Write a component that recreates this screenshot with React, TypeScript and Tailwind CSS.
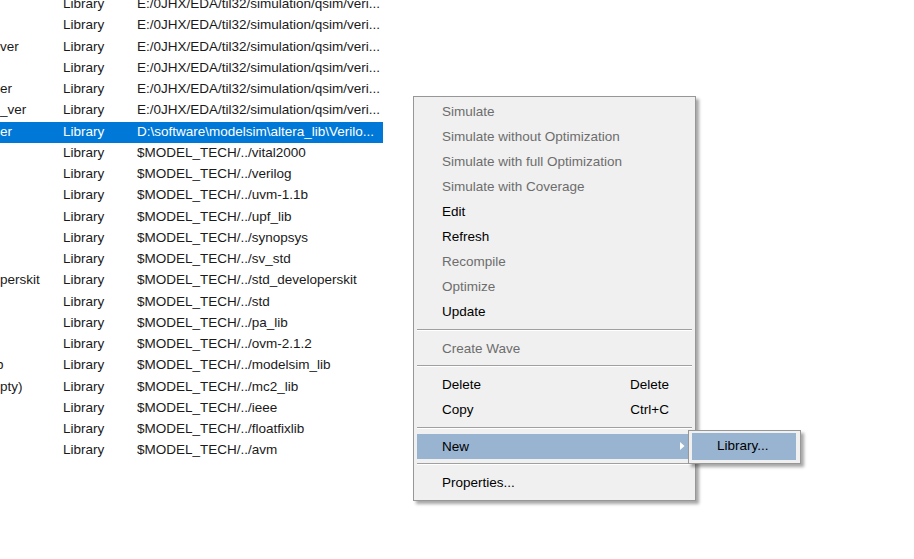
import React from "react";

type Row = { name: string; nameOffset?: number; path: string; selected?: boolean };

const rows: Row[] = [
  { name: "", path: "E:/0JHX/EDA/til32/simulation/qsim/veri..." },
  { name: "", path: "E:/0JHX/EDA/til32/simulation/qsim/veri..." },
  { name: "ver", path: "E:/0JHX/EDA/til32/simulation/qsim/veri..." },
  { name: "", path: "E:/0JHX/EDA/til32/simulation/qsim/veri..." },
  { name: "er", path: "E:/0JHX/EDA/til32/simulation/qsim/veri..." },
  { name: "_ver", path: "E:/0JHX/EDA/til32/simulation/qsim/veri..." },
  { name: "er", path: "D:\\software\\modelsim\\altera_lib\\Verilo...", selected: true },
  { name: "", path: "$MODEL_TECH/../vital2000" },
  { name: "", path: "$MODEL_TECH/../verilog" },
  { name: "", path: "$MODEL_TECH/../uvm-1.1b" },
  { name: "", path: "$MODEL_TECH/../upf_lib" },
  { name: "", path: "$MODEL_TECH/../synopsys" },
  { name: "", path: "$MODEL_TECH/../sv_std" },
  { name: "perskit", path: "$MODEL_TECH/../std_developerskit" },
  { name: "", path: "$MODEL_TECH/../std" },
  { name: "", path: "$MODEL_TECH/../pa_lib" },
  { name: "", path: "$MODEL_TECH/../ovm-2.1.2" },
  { name: "b", nameOffset: -4, path: "$MODEL_TECH/../modelsim_lib" },
  { name: "pty)", path: "$MODEL_TECH/../mc2_lib" },
  { name: "", path: "$MODEL_TECH/../ieee" },
  { name: "", path: "$MODEL_TECH/../floatfixlib" },
  { name: "", path: "$MODEL_TECH/../avm" },
];

type Item =
  | { kind: "item"; label: string; enabled: boolean; shortcut?: string; active?: boolean; arrow?: boolean }
  | { kind: "sep" };

const items: Item[] = [
  { kind: "item", label: "Simulate", enabled: false },
  { kind: "item", label: "Simulate without Optimization", enabled: false },
  { kind: "item", label: "Simulate with full Optimization", enabled: false },
  { kind: "item", label: "Simulate with Coverage", enabled: false },
  { kind: "item", label: "Edit", enabled: true },
  { kind: "item", label: "Refresh", enabled: true },
  { kind: "item", label: "Recompile", enabled: false },
  { kind: "item", label: "Optimize", enabled: false },
  { kind: "item", label: "Update", enabled: true },
  { kind: "sep" },
  { kind: "item", label: "Create Wave", enabled: false },
  { kind: "sep" },
  { kind: "item", label: "Delete", enabled: true, shortcut: "Delete" },
  { kind: "item", label: "Copy", enabled: true, shortcut: "Ctrl+C" },
  { kind: "sep" },
  { kind: "item", label: "New", enabled: true, active: true, arrow: true },
  { kind: "sep" },
  { kind: "item", label: "Properties...", enabled: true },
];

export default function App() {
  return (
    <div
      className="relative w-[914px] h-[559px] overflow-hidden bg-white text-[13.5px]"
      style={{ fontFamily: '"Liberation Sans", Arial, sans-serif' }}
    >
      <div className="mt-[-5.5px] w-[383px] flex flex-col">
        {rows.map((r, i) => (
          <div
            key={i}
            className={
              "h-[21.25px] flex items-center pb-[2px] overflow-hidden whitespace-nowrap " +
              (r.selected ? "bg-[#0078d7] text-white" : "text-[#1a1a1a]")
            }
          >
            <div className="w-[63px] shrink-0 overflow-hidden">
              <span style={r.nameOffset ? { marginLeft: r.nameOffset } : undefined}>{r.name}</span>
            </div>
            <div className="w-[74px] shrink-0">Library</div>
            <div className="flex-1 overflow-hidden">{r.path}</div>
          </div>
        ))}
      </div>

      {/* context menu */}
      <div className="absolute left-[413px] top-[96px] w-[283px] h-[405px] bg-[#f0f0f0] border border-[#979797] shadow-[3px_3px_3px_rgba(0,0,0,0.35)] pt-[2.5px] pl-[3px] pr-[2px] flex flex-col">
        {items.map((it, i) =>
          it.kind === "sep" ? (
            <div key={i} className="h-[11.5px] shrink-0 pt-[4px] pr-[1px]">
              <div className="h-px bg-[#a0a0a0]" />
              <div className="h-px bg-white" />
            </div>
          ) : (
            <div
              key={i}
              className={
                "h-[25px] shrink-0 mr-[4px] flex items-center pl-[25px] pr-[20px] pt-[1px] relative " +
                (it.active ? "bg-[#99b4d1] " : "") +
                (it.enabled ? "text-black" : "text-[#6d6d6d]")
              }
            >
              <span className="flex-1">{it.label}</span>
              {it.shortcut && <span>{it.shortcut}</span>}
              {it.arrow && (
                <svg className="absolute right-[4px] top-[8px]" width="5" height="8" viewBox="0 0 5 8">
                  <path d="M0 0 L4.5 4 L0 8 Z" fill="#ffffff" />
                </svg>
              )}
            </div>
          )
        )}
      </div>

      {/* submenu */}
      <div className="absolute left-[688px] top-[430px] w-[113px] h-[34px] bg-[#f0f0f0] border border-[#979797] shadow-[3px_3px_3px_rgba(0,0,0,0.35)] pt-[2px] pl-[3px] pr-[4px] pb-[3px] flex">
        <div className="flex-1 bg-[#99b4d1] flex items-center pl-[25px] text-black">Library...</div>
      </div>
    </div>
  );
}
